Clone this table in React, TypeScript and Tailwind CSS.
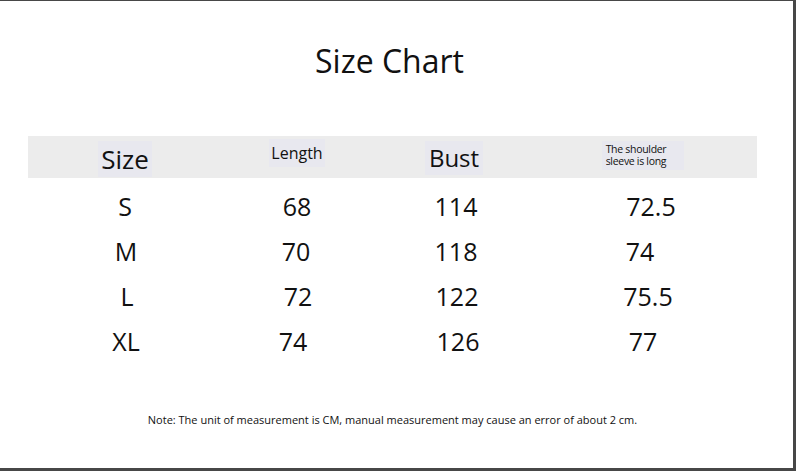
import React from "react";

const cols = "grid grid-cols-[194px_150px_170px_208px]";

const rows = [
  { size: "S", length: "68", bust: "114", sleeve: "72.5", sizeCls: "", lenCls: "", bustCls: "pr-[2px]", slvCls: "pl-[10px]" },
  { size: "M", length: "70", bust: "118", sleeve: "74", sizeCls: "pl-[2px]", lenCls: "pr-[2px]", bustCls: "pr-[2px]", slvCls: "pr-[12px]" },
  { size: "L", length: "72", bust: "122", sleeve: "75.5", sizeCls: "pl-[4px]", lenCls: "pl-[2px]", bustCls: "", slvCls: "pl-[4px]" },
  { size: "XL", length: "74", bust: "126", sleeve: "77", sizeCls: "pl-[2px]", lenCls: "pr-[8px]", bustCls: "pl-[2px]", slvCls: "pr-[6px]" },
];

const App = () => {
  return (
    <div
      className="w-[796px] h-[471px] bg-white border-t border-r-[3px] border-b-[3px] border-[#474747] flex flex-col text-[#111]"
      style={{ fontFamily: '"Open Sans", "Noto Sans", sans-serif' }}
    >
      {/* title */}
      <h1 className="text-[32px] leading-[40px] text-center mt-[40px] pr-[14px]">Size Chart</h1>

      {/* header band */}
      <div className={`mt-[55px] ml-[28px] w-[729px] h-[42px] bg-[#ececec] ${cols}`}>
        <div className="flex items-end justify-center pb-[1px]">
          <span className="bg-[#e8e8ef] px-[3px] text-[26px] leading-[36px]">Size</span>
        </div>
        <div className="flex items-start justify-center pt-[3px]">
          <span className="bg-[#e8e8ef] px-[2px] text-[16px] leading-[28px]">Length</span>
        </div>
        <div className="flex items-center justify-center pt-[2px] pr-[6px]">
          <span className="bg-[#e8e8ef] px-[4px] text-[24px] leading-[34px]">Bust</span>
        </div>
        <div className="flex items-center justify-center pr-[6px] pb-[4px]">
          <div className="bg-[#e8e8ef] pl-[4px] pr-[18px] py-[2px] text-[10.5px] leading-[12.5px] tracking-[-0.3px]">
            <div>The shoulder</div>
            <div>sleeve is long</div>
          </div>
        </div>
      </div>

      {/* rows */}
      <div className="ml-[28px] w-[729px] mt-[5px] flex flex-col">
        {rows.map((r) => (
          <div key={r.size} className={`h-[45px] ${cols} items-center text-[25px] leading-[32px] font-medium`}>
            <div className={`text-center ${r.sizeCls}`}>{r.size}</div>
            <div className={`text-center ${r.lenCls}`}>{r.length}</div>
            <div className={`text-center ${r.bustCls}`}>{r.bust}</div>
            <div className={`text-center ${r.slvCls}`}>{r.sleeve}</div>
          </div>
        ))}
      </div>

      {/* note */}
      <p className="mt-[49px] text-center text-[11px] leading-[16px] font-medium pr-[8px]">
        Note: The unit of measurement is CM, manual measurement may cause an error of about 2 cm.
      </p>
    </div>
  );
};

export default App;
